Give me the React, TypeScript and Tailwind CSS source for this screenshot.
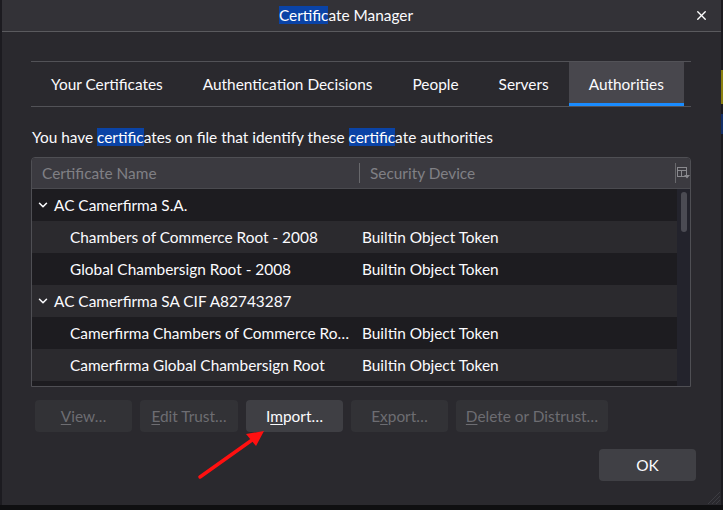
import { ChevronDown, X } from "lucide-react";

const rows = [
  { group: true, name: "AC Camerfirma S.A.", device: "" },
  { group: false, name: "Chambers of Commerce Root - 2008", device: "Builtin Object Token" },
  { group: false, name: "Global Chambersign Root - 2008", device: "Builtin Object Token" },
  { group: true, name: "AC Camerfirma SA CIF A82743287", device: "" },
  { group: false, name: "Camerfirma Chambers of Commerce Ro…", device: "Builtin Object Token" },
  { group: false, name: "Camerfirma Global Chambersign Root", device: "Builtin Object Token" },
  { group: false, name: "", device: "" },
];

const tabs = ["Your Certificates", "Authentication Decisions", "People", "Servers", "Authorities"];

const Hl = ({ children }: { children: React.ReactNode }) => (
  <span className="bg-[#0a43a6] text-white">{children}</span>
);

const Btn = ({
  w,
  enabled,
  children,
}: {
  w: string;
  enabled?: boolean;
  children: React.ReactNode;
}) => (
  <div
    className={`${w} h-[32px] pt-[2px] rounded-[4px] flex items-center justify-center ${
      enabled ? "bg-[#3f3f44] text-[#fbfbfe]" : "bg-[#323236] text-[#6d6d72]"
    }`}
  >
    {children}
  </div>
);

const ColumnPicker = () => (
  <svg width="13" height="12" viewBox="0 0 13 12" fill="none">
    <rect x="0.5" y="0.5" width="9" height="9" stroke="#8a8a8f" />
    <line x1="0.5" y1="3.5" x2="9.5" y2="3.5" stroke="#8a8a8f" />
    <line x1="4.5" y1="3.5" x2="4.5" y2="9.5" stroke="#8a8a8f" />
    <path d="M7 8h6l-3 3.5z" fill="#8a8a8f" />
  </svg>
);

export default function App() {
  return (
    <div className="w-[723px] h-[510px] bg-[#0f0f11] relative overflow-hidden font-['Lato',sans-serif] text-[15.4px] text-[#fbfbfe]">
      <div className="flex h-[505px]">
        <div className="w-[2px] bg-[#1c1b20]" />
        <div className="w-[719px] h-[505px] bg-[#2a292e] flex flex-col relative">
          {/* title bar */}
          <div className="h-[32px] bg-[#333237] border-b border-[#5a5a5e] flex items-center shrink-0">
            <div className="flex-1 text-center">
              <Hl>Certific</Hl>ate Manager
            </div>
            <div className="w-[31px] pl-[4px] flex items-center">
              <X size={15} strokeWidth={2.2} color="#ffffff" />
            </div>
          </div>

          <div className="pl-[29px] pr-[30px] pt-[29px] flex flex-col">
            {/* tabs */}
            <div className="h-[46px] border-y border-[#525257] flex">
              {tabs.map((t) => (
                <div
                  key={t}
                  className={`px-5 flex items-center ${
                    t === "Authorities"
                      ? "bg-[#48474d] border-b-[3px] border-[#1a8cff] pt-[5px]"
                      : "pt-[2px]"
                  }`}
                >
                  {t}
                </div>
              ))}
            </div>

            <div className="mt-[20px] mb-[10px] pl-[1px] leading-[20px]">
              You have <Hl>certific</Hl>ates on file that identify these <Hl>certific</Hl>ate authorities
            </div>

            {/* tree */}
            <div className="h-[230px] border border-[#4f4f54] rounded-t-[4px] flex flex-col overflow-hidden">
              <div className="h-[31px] bg-[#3b3a40] border-b border-[#4a4a4f] flex items-center text-[#808085] shrink-0">
                <div className="w-[327px] pl-[10px] pt-[2px]">Certificate Name</div>
                <div className="w-[1px] h-[20px] bg-[#68686c]" />
                <div className="flex-1 pl-[10px] pt-[2px]">Security Device</div>
                <div className="w-[1px] h-[20px] bg-[#68686c]" />
                <div className="w-[14px] flex justify-center pl-[1px]">
                  <ColumnPicker />
                </div>
              </div>
              <div className="flex flex-1 overflow-hidden">
                <div className="flex-1 flex flex-col">
                  {rows.map((r, i) => (
                    <div
                      key={i}
                      className={`h-[32px] shrink-0 flex items-center ${
                        i % 2 === 0 ? "bg-[#1d1c20]" : "bg-[#2b2a2e]"
                      }`}
                    >
                      <div className="w-[327px] flex items-center whitespace-nowrap overflow-hidden">
                        {r.group ? (
                          <>
                            <div className="w-[22px] pl-[4px] flex items-center">
                              <ChevronDown size={14} strokeWidth={2.6} color="#fbfbfe" />
                            </div>
                            <div className="pt-[2px]">{r.name}</div>
                          </>
                        ) : (
                          <div className="pl-[38px] pt-[2px]">{r.name}</div>
                        )}
                      </div>
                      <div className="pl-[3px] pt-[2px] whitespace-nowrap">{r.device}</div>
                    </div>
                  ))}
                </div>
                <div className="w-[13px] bg-[#23232c] flex justify-center pt-[3px]">
                  <div className="w-[6px] h-[40px] rounded-full bg-[#4b4b53]" />
                </div>
              </div>
            </div>

            {/* buttons */}
            <div className="mt-[13px] pl-[4px] flex gap-2">
              <Btn w="w-[97px]">
                <span>
                  <u className="underline-offset-2">V</u>iew…
                </span>
              </Btn>
              <Btn w="w-[98px]">
                <span>
                  <u className="underline-offset-2">E</u>dit Trust…
                </span>
              </Btn>
              <Btn w="w-[97px]" enabled>
                <span>
                  I<u className="underline-offset-2">m</u>port…
                </span>
              </Btn>
              <Btn w="w-[97px]">
                <span>
                  E<u className="underline-offset-2">x</u>port…
                </span>
              </Btn>
              <Btn w="w-[152px]">
                <span>
                  <u className="underline-offset-2">D</u>elete or Distrust…
                </span>
              </Btn>
            </div>

            <div className="mt-[17px] flex justify-end -mr-[5px]">
              <div className="w-[97px] h-[32px] pt-[2px] rounded-[4px] bg-[#404045] flex items-center justify-center">
                OK
              </div>
            </div>
          </div>

          {/* resize grip */}
          <svg className="absolute right-[1px] bottom-[1px]" width="14" height="14" viewBox="0 0 14 14">
            <line x1="14" y1="2" x2="2" y2="14" stroke="#3c3c42" strokeWidth="1" />
            <line x1="14" y1="6" x2="6" y2="14" stroke="#3c3c42" strokeWidth="1" />
            <line x1="14" y1="10" x2="10" y2="14" stroke="#3c3c42" strokeWidth="1" />
          </svg>
        </div>
        <div className="w-[2px] bg-[#1c1b20] flex flex-col">
          <div className="h-[70px]" />
          <div className="h-[34px] bg-[#8a8010]" />
          <div className="h-[10px]" />
          <div className="h-[20px] bg-[#14306a]" />
        </div>
      </div>

      {/* red arrow annotation */}
      <svg className="absolute left-0 top-0 pointer-events-none" width="723" height="510">
        <line x1="200" y1="477" x2="252" y2="440" stroke="#ff1010" strokeWidth="3.5" strokeLinecap="round" />
        <path d="M264 431 L246 434 L256 446 Z" fill="#ff1010" />
      </svg>
    </div>
  );
}
